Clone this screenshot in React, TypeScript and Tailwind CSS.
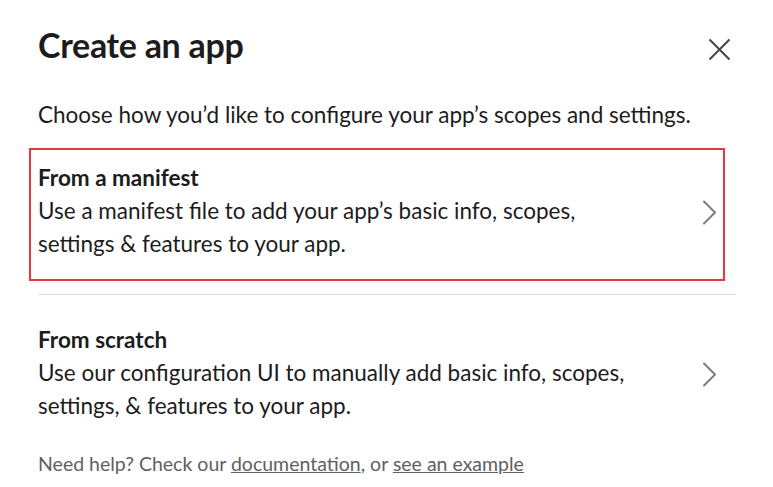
function Chevron() {
  return (
    <svg width="15" height="25" viewBox="0 0 15 25" fill="none" className="shrink-0 mt-[3px]">
      <path d="M2 1.5 L13 12.5 L2 23.5" stroke="#7c7c7c" strokeWidth="2" strokeLinecap="round" strokeLinejoin="round" />
    </svg>
  );
}

function Option({ title, lines, highlighted }: { title: string; lines: string[]; highlighted?: boolean }) {
  return (
    <div
      className={
        highlighted
          ? "flex items-center justify-between border-2 border-[#e8383d] ml-[-9px] mr-[10px] pl-[7px] pr-[6px] pt-[11px] pb-[19px]"
          : "flex items-center justify-between pr-[18px] pt-[28px]"
      }
    >
      <div>
        <div className="text-[22.5px] font-bold leading-[33px] text-[#1d1c1d]">{title}</div>
        {lines.map((l) => (
          <div key={l} className="text-[22.5px] leading-[33px] text-[#1d1c1d]">
            {l}
          </div>
        ))}
      </div>
      <Chevron />
    </div>
  );
}

export default function App() {
  return (
    <div className="w-[773px] h-[487px] bg-white font-['Lato','Liberation_Sans',sans-serif] px-[38px] pt-[25px] overflow-hidden">
      <div className="flex items-center justify-between">
        <h1 className="text-[34px] font-bold leading-[40px] text-[#1d1c1d] tracking-[-0.3px]">Create an app</h1>
        <svg width="23" height="23" viewBox="0 0 23 23" className="mr-[4px] mt-[8px]">
          <path d="M1.5 1.5 L21.5 21.5 M21.5 1.5 L1.5 21.5" stroke="#454545" strokeWidth="2" />
        </svg>
      </div>
      <p className="mt-[34px] text-[22.5px] leading-[32px] text-[#1d1c1d]">
        Choose how you’d like to configure your app’s scopes and settings.
      </p>
      <div className="mt-[17px]">
        <Option
          highlighted
          title="From a manifest"
          lines={["Use a manifest file to add your app’s basic info, scopes,", "settings & features to your app."]}
        />
        <div className="mt-[13px] h-px bg-[#dddddd]" />
        <Option
          title="From scratch"
          lines={["Use our configuration UI to manually add basic info, scopes,", "settings, & features to your app."]}
        />
        <p className="mt-[30px] text-[19.5px] leading-[24px] text-[#616061]">
          Need help? Check our <span className="underline">documentation</span>, or{" "}
          <span className="underline">see an example</span>
        </p>
      </div>
    </div>
  );
}
